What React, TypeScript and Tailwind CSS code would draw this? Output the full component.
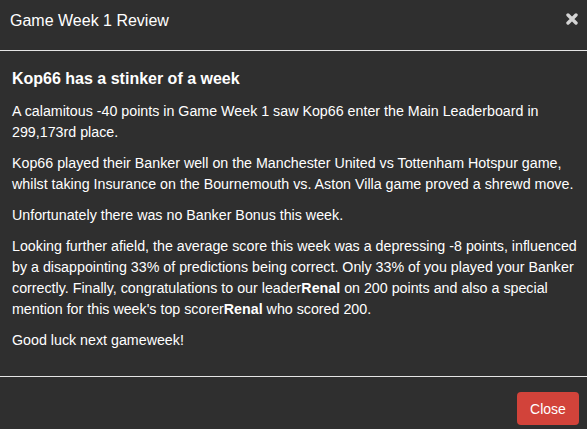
import React from "react";

export default function App() {
  const font = { fontFamily: '"Liberation Sans", Arial, sans-serif' };
  return (
    <div className="w-[587px] h-[429px] bg-[#2f2f2f] text-white overflow-hidden" style={font}>
      <div className="h-[50px] flex items-start justify-between pl-[10px] pr-[9px] border-b border-[#e5e5e5] box-content">
        <h3 className="text-[16px] leading-[20px] mt-[11px] text-white">Game Week 1 Review</h3>
        <button className="mt-[13px] w-[12px] h-[12px] text-[#d4d4d4]" aria-label="close">
          <svg viewBox="0 0 12 12" width="12" height="12">
            <path d="M2 2 L10 10 M10 2 L2 10" stroke="currentColor" strokeWidth="3.4" strokeLinecap="round" />
          </svg>
        </button>
      </div>
      <div className="pl-[12px] pr-[2px] pt-[19px] pb-[15px] text-[14.25px] leading-[21px]">
        <h4 className="text-[16px] font-bold leading-[18px] mb-[13px]">Kop66 has a stinker of a week</h4>
        <p className="mb-[10px]">
          A calamitous -40 points in Game Week 1 saw Kop66 enter the Main Leaderboard in 299,173rd place.
        </p>
        <p className="mb-[10px]">
          Kop66 played their Banker well on the Manchester United vs Tottenham Hotspur game, whilst taking Insurance on the Bournemouth vs. Aston Villa game proved a shrewd move.
        </p>
        <p className="mb-[10px]">Unfortunately there was no Banker Bonus this week.</p>
        <p className="mb-[10px]">
          Looking further afield, the average score this week was a depressing -8 points, influenced by a disappointing 33% of predictions being correct. Only 33% of you played your Banker correctly. Finally, congratulations to our leader<b>Renal</b> on 200 points and also a special mention for this week's top scorer<b>Renal</b> who scored 200.
        </p>
        <p className="mb-[10px]">Good luck next gameweek!</p>
      </div>
      <div className="border-t border-[#e5e5e5] pt-[15px] pr-[8px] flex justify-end">
        <button className="bg-[#d2433a] text-white text-[14px] leading-[20px] px-[12px] py-[6px] rounded-[4px] w-[62px] h-[33px]">
          Close
        </button>
      </div>
    </div>
  );
}
